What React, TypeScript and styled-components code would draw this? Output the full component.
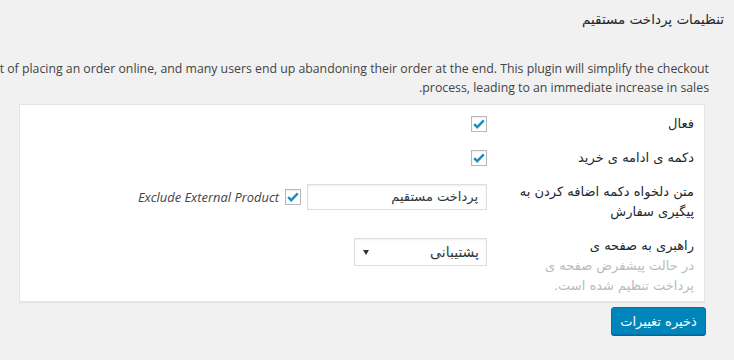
import React from "react";
import styled, { createGlobalStyle } from "styled-components";

const Global = createGlobalStyle`
  html, body { margin: 0; padding: 0; background: #f1f1f1; }
  body { font-family: "DejaVu Sans", "Noto Sans", sans-serif; color: #23282d; overflow: hidden; }
`;

const Page = styled.div`
  direction: rtl;
  width: 734px;
  height: 360px;
  overflow: hidden;
  box-sizing: border-box;
`;

const Title = styled.h2`
  margin: 0;
  padding: 9px 10px 0 0;
  font-size: 13.5px;
  font-weight: normal;
  line-height: 20px;
  color: #23282d;
`;

const Desc = styled.p`
  margin: 30px 25px 0 0;
  font-family: "Open Sans", "Noto Sans", sans-serif;
  font-size: 12.3px;
  line-height: 19px;
  color: #444;
  white-space: nowrap;
`;

const Line = styled.span`
  display: block;
`;

const Panel = styled.div`
  margin: 7px 29px 0 19px;
  background: #fff;
  border: 1px solid #e5e5e5;
  box-shadow: 0 1px 1px rgba(0, 0, 0, 0.04);
  padding: 9px 10px 5px 0;
  display: flex;
  flex-direction: column;
  gap: 14px;
`;

const Row = styled.div`
  display: grid;
  grid-template-columns: 197px 1fr;
  column-gap: 10px;
  align-items: start;
`;

const Label = styled.div`
  font-size: 13px;
  line-height: 20px;
  color: #23282d;
`;

const Hint = styled.div`
  color: #bbb;
`;

const Field = styled.div<{ $top?: number }>`
  display: flex;
  align-items: center;
  gap: 6px;
  padding-top: ${(p) => p.$top ?? 0}px;
  min-height: 20px;
`;

const Box = styled.span`
  width: 16px;
  height: 16px;
  box-sizing: border-box;
  border: 1px solid #b4b9be;
  background: #fff;
  box-shadow: inset 0 1px 2px rgba(0, 0, 0, 0.07);
  display: inline-flex;
  align-items: center;
  justify-content: center;
  flex: none;
`;

const Check = () => (
  <Box>
    <svg width="14" height="14" viewBox="0 0 14 14">
      <path d="M2.2 7.2 L5.2 10.2 L11.8 3.4" fill="none" stroke="#1e8cbe" strokeWidth="2.4" strokeLinecap="butt" />
    </svg>
  </Box>
);

const TextInput = styled.div`
  width: 180px;
  height: 26px;
  box-sizing: border-box;
  border: 1px solid #ddd;
  box-shadow: inset 0 1px 2px rgba(0, 0, 0, 0.07);
  background: #fff;
  padding: 0 8px;
  font-size: 13px;
  line-height: 24px;
  color: #32373c;
`;

const Exclude = styled.span`
  font-family: "Open Sans", "Noto Sans", sans-serif;
  font-style: italic;
  font-size: 12.9px;
  color: #444;
  direction: ltr;
`;

const Select = styled.div`
  width: 133px;
  height: 28px;
  box-sizing: border-box;
  border: 1px solid #ddd;
  background: #fff;
  box-shadow: inset 0 1px 2px rgba(0, 0, 0, 0.07);
  display: flex;
  align-items: center;
  justify-content: space-between;
  padding: 0 7px 0 8px;
  font-size: 14px;
  color: #32373c;
`;

const Arrow = styled.span`
  width: 0;
  height: 0;
  border-left: 3px solid transparent;
  border-right: 3px solid transparent;
  border-top: 5px solid #333;
`;

const Footer = styled.div`
  display: flex;
  margin: 5px 28px 0 0;
`;

const Button = styled.button`
  font-family: "DejaVu Sans", sans-serif;
  height: 28px;
  width: 95px;
  padding: 0;
  background: #0085ba;
  border: 1px solid #0073aa;
  border-radius: 3px;
  box-shadow: 0 1px 0 #006799;
  color: #fff;
  font-size: 13px;
  direction: rtl;
  cursor: pointer;
`;

export default function App() {
  return (
    <>
      <Global />
      <Page>
        <Title>تنظیمات پرداخت مستقیم</Title>
        <Desc>
          <Line>t of placing an order online, and many users end up abandoning their order at the end. This plugin will simplify the checkout</Line>
          <Line>process, leading to an immediate increase in sales.</Line>
        </Desc>
        <Panel>
          <Row>
            <Label>فعال</Label>
            <Field>
              <Check />
            </Field>
          </Row>
          <Row>
            <Label>دکمه ی ادامه ی خرید</Label>
            <Field>
              <Check />
            </Field>
          </Row>
          <Row>
            <Label>
              متن دلخواه دکمه اضافه کردن به
              <br />
              پیگیری سفارش
            </Label>
            <Field $top={2}>
              <TextInput>پرداخت مستقیم</TextInput>
              <Check />
              <Exclude>Exclude External Product</Exclude>
            </Field>
          </Row>
          <Row>
            <Label>
              راهبری به صفحه ی
              <Hint>
                در حالت پیشفرض صفحه ی
                <br />
                پرداخت تنظیم شده است.
              </Hint>
            </Label>
            <Field $top={2}>
              <Select>
                <span>پشتیبانی</span>
                <Arrow />
              </Select>
            </Field>
          </Row>
        </Panel>
        <Footer>
          <Button>ذخیره تغییرات</Button>
        </Footer>
      </Page>
    </>
  );
}
